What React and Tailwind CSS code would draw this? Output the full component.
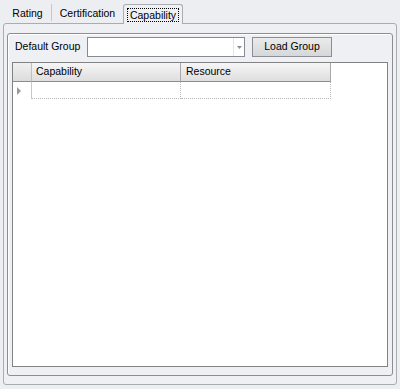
import React from 'react'

const font = { fontFamily: '"Liberation Sans", Arial, sans-serif' }

const Tabs = () => (
  <div className="flex h-[23px] pl-[4px] items-end text-[10.5px] text-black relative z-10">
    <div className="w-[48px] h-[17px] mb-[2px] pt-[2px] flex items-center justify-center border-r border-[#c4c7cc]">Rating</div>
    <div className="w-[71px] h-[17px] mb-[2px] pt-[2px] flex items-center justify-center">Certification</div>
    <div className="w-[60px] h-[20px] -mb-px flex items-center justify-center bg-[#eef0f3] border border-b-0 border-[#a9acb1] rounded-t-[3px]">
      <span className="border border-dotted border-black px-[2px] leading-[12px]">Capability</span>
    </div>
  </div>
)

const TopRow = () => (
  <div className="flex items-center h-[20px] text-[10.5px]">
    <span className="w-[79px] pl-[7px]">Default Group</span>
    <div className="w-[158px] h-[20px] border border-[#868a92] bg-white flex justify-end">
      <div className="w-[11px] h-full border-l border-[#e2e4e8] flex items-center justify-center">
        <svg width="5" height="3" viewBox="0 0 5 3"><path d="M0 0h5L2.5 3z" fill="#8a8d92" /></svg>
      </div>
    </div>
    <button className="ml-[7px] w-[80px] h-[20px] border border-[#8b8e94] bg-gradient-to-b from-[#ebebeb] to-[#d6d7d9] flex items-center justify-center text-[10.5px]">
      Load Group
    </button>
  </div>
)

const Grid = () => (
  <div className="mt-[5px] ml-[4px] w-[376px] h-[305px] border border-[#828282] bg-white text-[10.5px]">
    <div className="flex h-[19px]">
      <div className="w-[19px] border-r border-[#c0c0c0] border-b border-b-[#8c8c8c] bg-gradient-to-b from-[#f0f0f0] to-[#dcdcdc]" />
      <div className="w-[149px] pl-[4px] flex items-center border-r border-[#a8a8a8] border-b border-b-[#8c8c8c] bg-gradient-to-b from-[#f6f6f6] to-[#dedede]">Capability</div>
      <div className="w-[150px] pl-[5px] flex items-center border-r border-[#a8a8a8] border-b border-b-[#8c8c8c] bg-gradient-to-b from-[#f6f6f6] to-[#dedede]">Resource</div>
    </div>
    <div className="flex h-[17px]">
      <div className="w-[19px] border-r border-[#c8c8c8] flex items-center pl-[4px]">
        <svg width="4" height="8" viewBox="0 0 4 8"><path d="M0 0l4 4L0 8z" fill="#9a9a9a" /></svg>
      </div>
      <div className="w-[149px] border-r border-b border-dotted border-[#b8b8b8]" />
      <div className="w-[150px] border-r border-b border-dotted border-[#b8b8b8]" />
    </div>
  </div>
)

export default function App() {
  return (
    <div className="w-[400px] h-[389px] bg-[#eceef2] text-black overflow-hidden" style={font}>
      <Tabs />
      <div className="mx-[3px] w-[394px] h-[362px] border border-[#a9acb1] rounded-[3px] bg-[#eef0f3] pt-[9px] px-[3px]">
        <div className="w-[386px] h-[343px] border border-[#8a8d92] rounded-[3px] shadow-[inset_1px_1px_0_#ffffff] pt-[3px]">
          <TopRow />
          <Grid />
        </div>
      </div>
    </div>
  )
}
